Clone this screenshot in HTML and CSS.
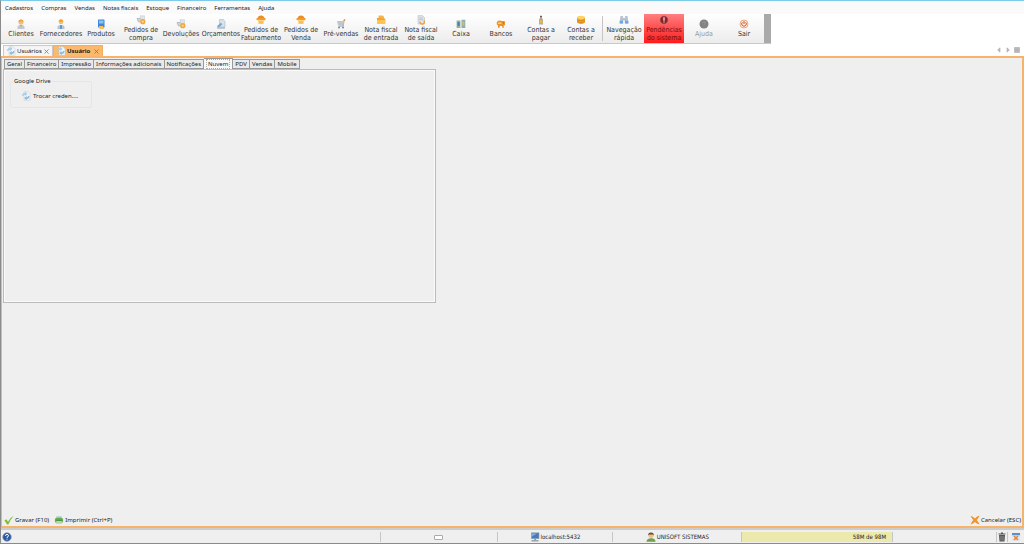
FILE: index.html
```html
<!DOCTYPE html>
<html lang="pt-BR">
<head>
<meta charset="utf-8">
<title>Usuário</title>
<link rel="stylesheet" href="styles.css">
</head>
<body>
<svg class="sprite" aria-hidden="true">
  <symbol id="person" viewBox="0 0 10 10"><path d="M1.500 10V8Q1.500 6 5 6T8.500 8V10Z" fill="#bfc9d8"/><path d="M4 6h2L5 8.500Z" fill="#f39a2c"/><circle cx="5" cy="3.200" r="2.500" fill="#f2c078"/><path d="M2.400 3Q2.500.4 5 .4T7.600 3Q6 1.500 2.400 3Z" fill="#e2a33b"/></symbol>
  <symbol id="supplier" viewBox="0 0 10 10"><path d="M1.500 10V8Q1.500 6 5 6T8.500 8V10Z" fill="#b9c4d2"/><path d="M4 6h2v4H4Z" fill="#5a9ee0"/><circle cx="5" cy="3" r="2.300" fill="#f3bd6c"/><path d="M2.500 2.500Q3 .2 5 .2T7.500 2.500Z" fill="#f0a22c"/></symbol>
  <symbol id="product" viewBox="0 0 10 10"><rect x="2" y=".5" width="6.500" height="8" rx=".6" fill="#3f86dd"/><path d="M3 1.500h4.500v3H3Z" fill="#8dc0f5"/><path d="M3 7h4l1 3H3.500Z" fill="#f3c05d"/></symbol>
  <symbol id="cart" viewBox="0 0 10 10"><path d="M1 3.500h5.500L6 7H2.500Z" fill="#d2d6db" stroke="#9ba2aa" stroke-width=".6"/><path d="M4 .8h4.500v4H5Z" fill="#e3e6e9" stroke="#b3b8bd" stroke-width=".4"/><circle cx="6.800" cy="6.700" r="2.600" fill="#f3a73c"/><path d="M5.600 6.700h2.400M6.800 5.500v2.400" stroke="#ffe9c8" stroke-width=".6"/></symbol>
  <symbol id="quote" viewBox="0 0 10 10"><path d="M3.500.6h4L9 2.500V8H3.500Z" fill="#d8e3ec" stroke="#9fadb8" stroke-width=".5"/><path d="M.8 7.200L5 3.800l1.400 1.500L2.800 8.600Z" fill="#75a8d9"/><path d="M1 9h8" stroke="#8196aa" stroke-width=".9"/></symbol>
  <symbol id="basket" viewBox="0 0 10 10"><path d="M1.500 3.800Q2 .6 5 .6T8.500 3.800" fill="#ee8c23"/><path d="M.6 3h8.800v2.200H.6Z" fill="#f39a2b"/><path d="M2 5.200h6L7.500 9h-5Z" fill="#ffcf68"/><path d="M4 6v2.500M6 6v2.500" stroke="#e98824" stroke-width=".5"/></symbol>
  <symbol id="trolley" viewBox="0 0 10 10"><path d="M9.400.8H8.200L7.200 7H2.800" fill="none" stroke="#858c94" stroke-width=".8"/><path d="M1 2h7L7.300 6.500H2Z" fill="#bfc7ce"/><circle cx="3" cy="8.500" r="1" fill="#7b838c"/><circle cx="7" cy="8.500" r="1" fill="#7b838c"/><circle cx="8.300" cy="1.200" r=".8" fill="#e68e33"/></symbol>
  <symbol id="folder" viewBox="0 0 10 10"><path d="M2.500.6H7L8 2v3H2.500Z" fill="#f3b352"/><path d="M1 3h3l1 .6h4.200V9H1Z" fill="#f2a52c"/><path d="M1 5h8.200v4H1Z" fill="#ffc453"/></symbol>
  <symbol id="docout" viewBox="0 0 10 10"><path d="M2 .6h4.500L8.500 2.500V9H2Z" fill="#e1e4e7" stroke="#afb5ba" stroke-width=".5"/><path d="M3 3h4M3 4.500h4" stroke="#a5adb4" stroke-width=".5"/><path d="M7.800 5.500A2.200 2.200 0 1 1 4 6.500" fill="none" stroke="#ee9938" stroke-width="1.200"/></symbol>
  <symbol id="cash" viewBox="0 0 10 10"><rect x=".6" y="1.500" width="3.800" height="7.500" fill="#8fb59b"/><rect x="5.500" y=".8" width="3.800" height="8.200" fill="#87afb6"/><path d="M1.600 3h2v4h-2Z" fill="#4c7ca4"/><path d="M6.400 2.500h2v4h-2Z" fill="#dbb864"/></symbol>
  <symbol id="bank" viewBox="0 0 10 10"><path d="M.8 3Q3 .8 6 2L9 2.200V6L7.800 6.500V8.800H6.200V7H3.700V8.800H2V6.500L.8 5.500Z" fill="#ef9226"/><path d="M2 3.500h3.500v1.500H2Z" fill="#ffd184"/><circle cx="7.400" cy="3.800" r=".6" fill="#a45c16"/></symbol>
  <symbol id="pay" viewBox="0 0 10 10"><path d="M4.200.5h1.600v2.200L7 4.500V9.500H3V4.500L4.200 2.700Z" fill="#a2aab1"/><path d="M3.500 5h3v3.400h-3Z" fill="#ecb44f"/><path d="M4 1h2v1.200H4Z" fill="#7b5344"/></symbol>
  <symbol id="coins" viewBox="0 0 10 10"><path d="M1 2.500v5Q5 10.500 9 7.500v-5Z" fill="#f0a42a"/><ellipse cx="5" cy="2.600" rx="4" ry="1.800" fill="#ffd262"/><path d="M1 4.700Q5 7 9 4.700M1 6.500Q5 9 9 6.500" fill="none" stroke="#c97813" stroke-width=".6"/></symbol>
  <symbol id="binoculars" viewBox="0 0 10 10"><path d="M1.500 1h2.400v2h2.200V1h2.400l1 7.500H5.800V5.500H4.200v3H.5Z" fill="#b6c3cf"/><path d="M.8 5.700H4v2.800H.7ZM6 5.700h3.200l.2 2.800H6Z" fill="#68a9e8"/></symbol>
  <symbol id="alert" viewBox="0 0 10 10"><circle cx="5" cy="5" r="4.200" fill="#8d2229" stroke="#d88484" stroke-width=".7"/><path d="M5 2.200v3.500M5 6.500v1.100" stroke="#fff" stroke-width="1.100"/></symbol>
  <symbol id="helpgray" viewBox="0 0 10 10"><circle cx="5" cy="5" r="4.500" fill="#828282"/><path d="M3.700 4Q3.700 2.700 5 2.700T6.300 4Q6.300 4.700 5 5.300V6M5 6.700v.8" fill="none" stroke="#989898" stroke-width=".8"/></symbol>
  <symbol id="power" viewBox="0 0 10 10"><circle cx="5" cy="5" r="4" fill="#fff4e9" stroke="#e59a5c" stroke-width=".8"/><path d="M3.300 3.300A2.300 2.300 0 1 0 6.700 3.300M5 2v3" fill="none" stroke="#d44327" stroke-width="1"/></symbol>
  <symbol id="refresh" viewBox="0 0 10 10"><path d="M3 .7h4l2 2V9.300H3Z" fill="#eef4f8" stroke="#b7c5d0" stroke-width=".4"/><path d="M1 5Q1.200 2 4 2V.8L6.400 3 4 5V3.700Q2.500 3.600 2.400 5Z" fill="#a9cbe4"/><path d="M8.500 5Q8.300 8 5.600 8V9.300L3.200 7l2.400-1.900v1.300Q7 6.500 7.100 5Z" fill="#8db8da"/></symbol>
  <symbol id="check" viewBox="0 0 10 10"><path d="M.4 5.500L2.400 4.300 4 6.800Q6 2.700 9.700.8 6.500 4.500 4.300 9.600H3.200Z" fill="#7fbe32"/></symbol>
  <symbol id="printer" viewBox="0 0 10 10"><path d="M2.300 1.200h5.400v3H2.300Z" fill="#a9d4cf"/><rect x=".9" y="2.800" width="8.200" height="5" rx="1.900" fill="#69ad53"/><path d="M2.300 6h5.400v2.800H2.300Z" fill="#b9d8a8"/><path d="M2.300 5.300h5.400" stroke="#3f7d3a" stroke-width=".7"/></symbol>
  <symbol id="cross" viewBox="0 0 10 10"><path d="M.6.8Q3.500 1.800 5 3.500 7 1.200 9.700.6 8.600 3.200 6.700 5 8.600 7 9.600 9.600 6.500 8.700 5 7 3.300 8.700.5 9.500 1.700 6.800 3.300 5 1.500 3.200.6.800Z" fill="#ef952c"/></symbol>
  <symbol id="help" viewBox="0 0 10 10"><circle cx="5" cy="5" r="4.300" fill="#2d579c" stroke="#8ba5cc" stroke-width=".7"/><path d="M3.500 3.900Q3.500 2.400 5 2.400T6.500 3.800Q6.500 4.700 5 5.300V6M5 6.700v1" fill="none" stroke="#fff" stroke-width="1"/></symbol>
  <symbol id="screen" viewBox="0 0 10 10"><rect x="1.400" y=".8" width="7.600" height="5.900" fill="#4a78b8" stroke="#91a5bb" stroke-width=".6"/><path d="M2 1.500h5L2 4.500Z" fill="#85afe0"/><path d="M4 7h2v1h2.500v1.500h-7V8H4Z" fill="#9aa3ac"/></symbol>
  <symbol id="user" viewBox="0 0 10 10"><path d="M.5 9.700Q.5 6.400 5 6.200t4.500 3.500Z" fill="#6fa14d"/><circle cx="5" cy="3.500" r="2.500" fill="#efc08a"/><path d="M2.200 3.500Q2 .4 5 .4T7.800 3.500L6.800 2.400H3.400Z" fill="#714724"/></symbol>
  <symbol id="trash" viewBox="0 0 10 10"><path d="M2 3h6L7.500 9.500h-5ZM1.500 1.500h7v1h-7ZM4 .6h2v1H4Z" fill="#555"/><path d="M4 4v4.500M6 4v4.500" stroke="#bbb" stroke-width=".6"/></symbol>
  <symbol id="calendar" viewBox="0 0 10 10"><path d="M1 1h8v8H1Z" fill="#dfe7ef"/><path d="M1 1h8v2.200H1Z" fill="#5a90cc"/><path d="M3 4l4 4M7 4L3 8" stroke="#e98139" stroke-width="1.500"/></symbol>
</svg>

<div class="app">
  <nav class="menubar">
    <a href="#">Cadastros</a><a href="#">Compras</a><a href="#">Vendas</a><a href="#">Notas fiscais</a><a href="#">Estoque</a><a href="#">Financeiro</a><a href="#">Ferramentas</a><a href="#">Ajuda</a>
  </nav>

  <div class="toolbar">
    <button class="tool"><svg class="icon"><use href="#person"/></svg><span>Clientes</span></button>
    <button class="tool"><svg class="icon"><use href="#supplier"/></svg><span>Fornecedores</span></button>
    <button class="tool"><svg class="icon"><use href="#product"/></svg><span>Produtos</span></button>
    <button class="tool"><svg class="icon"><use href="#cart"/></svg><span>Pedidos de<br>compra</span></button>
    <button class="tool"><svg class="icon"><use href="#cart"/></svg><span>Devoluções</span></button>
    <button class="tool"><svg class="icon"><use href="#quote"/></svg><span>Orçamentos</span></button>
    <button class="tool"><svg class="icon"><use href="#basket"/></svg><span>Pedidos de<br>Faturamento</span></button>
    <button class="tool"><svg class="icon"><use href="#basket"/></svg><span>Pedidos de<br>Venda</span></button>
    <button class="tool"><svg class="icon"><use href="#trolley"/></svg><span>Pré-vendas</span></button>
    <button class="tool"><svg class="icon"><use href="#folder"/></svg><span>Nota fiscal<br>de entrada</span></button>
    <button class="tool"><svg class="icon"><use href="#docout"/></svg><span>Nota fiscal<br>de saída</span></button>
    <button class="tool"><svg class="icon"><use href="#cash"/></svg><span>Caixa</span></button>
    <button class="tool"><svg class="icon"><use href="#bank"/></svg><span>Bancos</span></button>
    <button class="tool"><svg class="icon"><use href="#pay"/></svg><span>Contas a<br>pagar</span></button>
    <button class="tool"><svg class="icon"><use href="#coins"/></svg><span>Contas a<br>receber</span></button>
    <span class="tool-separator"></span>
    <button class="tool"><svg class="icon"><use href="#binoculars"/></svg><span>Navegação<br>rápida</span></button>
    <button class="tool tool-alert"><svg class="icon"><use href="#alert"/></svg><span>Pendências<br>do sistema</span></button>
    <button class="tool" disabled><svg class="icon"><use href="#helpgray"/></svg><span>Ajuda</span></button>
    <button class="tool"><svg class="icon"><use href="#power"/></svg><span>Sair</span></button>
    <span class="tool-grip"></span>
  </div>

  <div class="doc-tabs">
    <div class="doc-tab"><svg class="icon"><use href="#refresh"/></svg><span class="doc-name">Usuários</span><button class="close" aria-label="Fechar Usuários"><svg viewBox="0 0 5 5"><path d="M.5.5l4 4M4.500.5l-4 4"/></svg></button></div>
    <div class="doc-tab doc-tab-active"><svg class="icon"><use href="#refresh"/></svg><span class="doc-name">Usuário</span><button class="close" aria-label="Fechar Usuário"><svg viewBox="0 0 5 5"><path d="M.5.5l4 4M4.500.5l-4 4"/></svg></button></div>
    <div class="doc-nav">
      <button aria-label="Anterior"><svg viewBox="0 0 6 6"><path d="M4 .8v4.400L1.700 3Z"/></svg></button>
      <button aria-label="Próxima"><svg viewBox="0 0 6 6"><path d="M2 .8v4.400L4.300 3Z"/></svg></button>
      <button aria-label="Lista"><svg viewBox="0 0 6 6"><path d="M.5.5h5v5h-5ZM1 2.300h4M1 3.800h4"/></svg></button>
    </div>
  </div>

  <main class="document">
    <div class="tabs" role="tablist">
      <button class="tab" role="tab">Geral</button><button class="tab" role="tab">Financeiro</button><button class="tab" role="tab">Impressão</button><button class="tab" role="tab">Informações adicionais</button><button class="tab" role="tab">Notificações</button><button class="tab tab-active" role="tab" aria-selected="true"><span>Nuvem</span></button><button class="tab" role="tab">PDV</button><button class="tab" role="tab">Vendas</button><button class="tab" role="tab">Mobile</button>
    </div>
    <section class="panel">
      <fieldset class="group">
        <legend>Google Drive</legend>
        <button class="action"><svg class="icon"><use href="#refresh"/></svg>Trocar creden....</button>
      </fieldset>
    </section>
    <footer class="actions">
      <button class="action"><svg class="icon"><use href="#check"/></svg>Gravar (F10)</button>
      <button class="action"><svg class="icon"><use href="#printer"/></svg>Imprimir (Ctrl+P)</button>
      <button class="action action-cancel"><svg class="icon"><use href="#cross"/></svg>Cancelar (ESC)</button>
    </footer>
  </main>

  <div class="statusbar">
    <div class="status status-help"><svg class="icon"><use href="#help"/></svg></div>
    <div class="status"><span class="indicator"></span></div>
    <div class="status"><svg class="icon"><use href="#screen"/></svg>localhost:5432</div>
    <div class="status"><svg class="icon"><use href="#user"/></svg>UNISOFT SISTEMAS</div>
    <div class="status status-memory"><span>58M de 98M</span></div>
    <div class="status"></div>
    <div class="status"><svg class="icon"><use href="#trash"/></svg></div>
    <div class="status"><svg class="icon"><use href="#calendar"/></svg></div>
  </div>
</div>
</body>
</html>
```
FILE: styles.css
```css
* { box-sizing: border-box; }

body {
  margin: 0;
  font: 6px/8px "Noto Sans", "Open Sans", sans-serif;
  color: #222;
}

button {
  margin: 0;
  padding: 0;
  border: 0;
  background: none;
  font: inherit;
  color: inherit;
}

.sprite { display: none; }

.icon {
  width: 10px;
  height: 10px;
  flex: none;
}

.app {
  display: flex;
  flex-direction: column;
  min-height: 100vh;
  border-top: 1px solid #7ccbe9;
  border-bottom: 1px solid #6b95a3;
  border-left: 1px solid #8b8b8b;
  background: #fff;
}

.menubar {
  display: flex;
  align-items: center;
  gap: 8px;
  height: 13px;
  padding-left: 4px;
  background: #fafafa;
}

.menubar a {
  color: inherit;
  text-decoration: none;
  white-space: nowrap;
}

.toolbar {
  display: flex;
  align-self: flex-start;
  height: 30px;
  border-bottom: 1px solid #c8c8c8;
  background: linear-gradient(#fff, #ececec);
  color: #333;
  font: 7px/8px "DejaVu Sans Condensed", "Noto Sans", sans-serif;
}

.tool {
  display: flex;
  flex-direction: column;
  align-items: center;
  justify-content: center;
  gap: 1px;
  width: 40px;
  white-space: nowrap;
}

.tool:disabled { color: #999; }

.tool-alert {
  background: linear-gradient(#ff7f7f, #ff1c1c);
  color: #701010;
}

.tool-separator {
  width: 1px;
  margin: 2px 1px;
  background: #c4c4c4;
}

.tool-grip {
  width: 7px;
  background: #a9a9a9;
}

.doc-tabs {
  display: flex;
  align-items: flex-end;
  height: 12px;
  padding-left: 2px;
}

.doc-tab {
  display: flex;
  align-items: center;
  gap: 1px;
  width: 50px;
  height: 11px;
  padding: 0 3px 0 2px;
  border: 1px solid #c9c9c9;
  border-bottom: 0;
  background: #f5f5f5;
}

.doc-tab-active {
  border-color: #f2ae62;
  background: #fdb96b;
  font-weight: bold;
}

.doc-name { flex: 1; }

.close, .doc-nav button { display: flex; }

.close svg {
  width: 5px;
  height: 5px;
  stroke: #777;
  stroke-width: 0.8;
}

.doc-nav {
  display: flex;
  align-self: center;
  gap: 3px;
  margin-left: auto;
  padding-right: 4px;
}

.doc-nav svg {
  width: 6px;
  height: 6px;
  fill: #bbb;
  stroke: #aaa;
  stroke-width: 0.6;
}

.document {
  display: flex;
  flex: 1;
  flex-direction: column;
  padding-left: 1px;
  border: 2px solid #f5b36c;
  border-left-width: 1px;
  background: #efefef;
}

.tabs {
  display: flex;
  align-items: flex-end;
  height: 11px;
  padding-left: 1px;
}

.tab {
  height: 10px;
  padding: 0 2px;
  border: 1px solid #999;
  border-left-width: 0;
  background: #e9e9e9;
  white-space: nowrap;
}

.tab:first-child { border-left-width: 1px; }

.tab-active {
  height: 11px;
  border-bottom: 0;
  background: #f8f8f8;
}

.tab-active span {
  display: block;
  padding: 0 1px;
  border: 1px dotted #aaa;
}

.panel {
  width: 42.5%;
  height: 50vh;
  max-height: 234px;
  padding: 7px 6px;
  border: 1px solid #bbb;
  background: #efefef;
  box-shadow: inset 1px 1px #fafafa, inset -1px -1px #fafafa;
}

.group {
  width: 82px;
  height: 31px;
  margin: 0;
  padding: 6px 10px;
  border: 1px solid #e6e6e6;
  border-radius: 2px;
}

.group legend {
  margin-left: -8px;
  padding: 0 1px;
}

.action {
  display: flex;
  align-items: center;
  gap: 1px;
  white-space: nowrap;
}

.group .action { gap: 2px; }

.actions {
  display: flex;
  gap: 5px;
  margin-top: auto;
  padding: 0 1px 1px;
}

.action-cancel { margin-left: auto; }

.statusbar {
  display: grid;
  grid-template-columns: 380fr 117fr 116fr 129fr 151fr 104fr 11px 16px;
  height: 15px;
  padding: 2px 0 1px;
  border-top: 2px solid #ccc;
  background: #efefef;
  font: 6px/8px "DejaVu Sans Condensed", "Noto Sans", sans-serif;
}

.status {
  display: flex;
  align-items: center;
  justify-content: center;
  gap: 1px;
  border-right: 1px solid #c6c6c6;
  white-space: nowrap;
}

.status:last-child { border-right: 0; }

.status-help {
  justify-content: flex-start;
  padding-left: 1px;
}

.indicator {
  width: 9px;
  height: 5px;
  border: 1px solid #aaa;
  border-radius: 1px;
  background: #fff;
}

.status-memory {
  justify-content: flex-end;
  padding-right: 6px;
  background: #ece9ad;
}
```
